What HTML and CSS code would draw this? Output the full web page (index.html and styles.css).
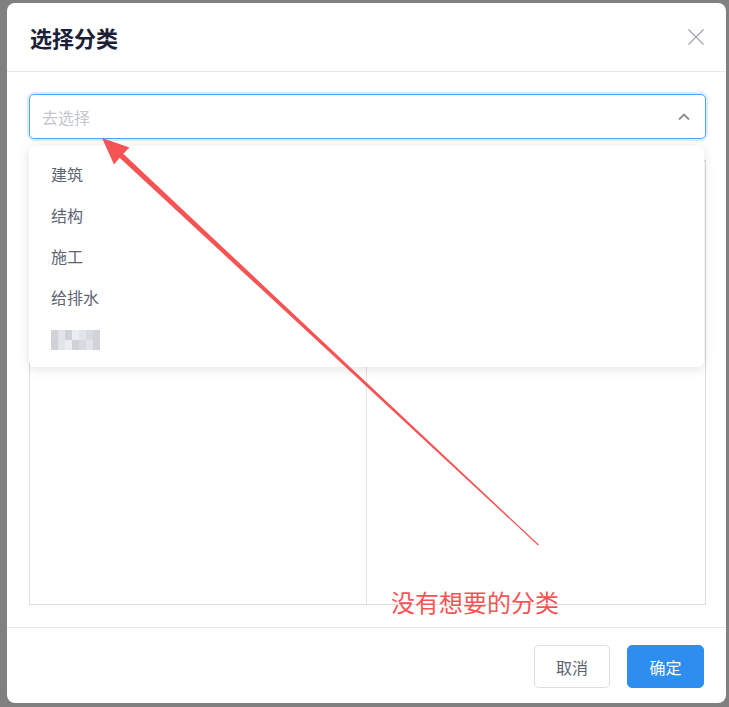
FILE: index.html
```html
<!DOCTYPE html>
<html lang="zh">
<head>
<meta charset="utf-8">
<title>选择分类</title>
<link rel="stylesheet" href="styles.css">
</head>
<body>
<div class="dialog">
  <div class="header">
    <div class="title">选择分类</div>
    <svg class="close" width="18" height="18" viewBox="0 0 18 18"><path d="M1.5 1.5L16.5 16.5M16.5 1.5L1.5 16.5" stroke="#a3a6ad" stroke-width="1.4" fill="none"/></svg>
  </div>
  <div class="body">
    <div class="select-wrap">
      <div class="select">
        <span class="placeholder">去选择</span>
        <svg class="chev" width="14" height="10" viewBox="0 0 14 10"><path d="M2 7.5L7 2.5L12 7.5" stroke="#8a8d96" stroke-width="1.8" fill="none"/></svg>
      </div>
      <div class="dropdown">
        <div class="item">建筑</div>
        <div class="item">结构</div>
        <div class="item">施工</div>
        <div class="item">给排水</div>
        <div class="item blur">
          <span class="mosaic">
            <i class="m1"></i><i class="m2"></i><i class="m3"></i><i class="m4"></i><i class="m2"></i><i class="m5"></i><i class="m1"></i>
            <i class="m3"></i><i class="m2"></i><i class="m4"></i><i class="m3"></i><i class="m5"></i><i class="m2"></i><i class="m1"></i>
          </span>
        </div>
      </div>
    </div>
    <div class="panes">
      <div class="pane first"></div>
      <div class="pane"></div>
    </div>
  </div>
  <div class="footer">
    <button class="btn">取消</button>
    <button class="btn primary">确定</button>
  </div>
</div>
<svg class="annot" width="729" height="707" viewBox="0 0 729 707">
  <polygon points="102,138 129.5,147.5 123.3,153.8 538.8,544.6 538,545.4 119.6,157.8 114,164.5" fill="#f65454"/>
</svg>
<div class="note">没有想要的分类</div>
</body>
</html>
```
FILE: styles.css
```css
html, body {
  margin: 0;
  padding: 0;
}
body {
  width: 729px;
  height: 707px;
  background: #808080;
  font-family: "Noto Sans CJK SC", "Noto Sans", sans-serif;
  overflow: hidden;
  position: relative;
}
.dialog {
  margin: 3px 0 0 7px;
  width: 719px;
  height: 700px;
  background: #fff;
  border-radius: 8px;
  display: flex;
  flex-direction: column;
  box-sizing: border-box;
}
.header {
  height: 69px;
  flex: none;
  box-sizing: border-box;
  border-bottom: 1px solid #e6e7eb;
  display: flex;
  align-items: center;
  justify-content: space-between;
  padding: 0 21px 0 23px;
}
.title {
  font-size: 22px;
  font-weight: 700;
  color: #1b2036;
  line-height: 1;
}
.close {
  display: block;
}
.body {
  padding: 22px 20px 0 22px;
  flex: none;
}
.select-wrap {
  position: relative;
}
.select {
  height: 45px;
  box-sizing: border-box;
  border: 1px solid #55a2f6;
  border-radius: 5px;
  box-shadow: 0 0 0 2px #dcebfc;
  display: flex;
  align-items: center;
  justify-content: space-between;
  padding: 0 14px 0 12px;
}
.placeholder {
  font-size: 16px;
  color: #c3c6cd;
}
.chev {
  display: block;
}
.dropdown {
  position: absolute;
  top: 52px;
  left: 0;
  width: 675px;
  box-sizing: border-box;
  background: #fff;
  border-radius: 6px;
  box-shadow: 0 2px 12px rgba(0, 0, 0, 0.12);
  padding: 8px 0;
  z-index: 2;
}
.item {
  height: 41px;
  line-height: 41px;
  padding-left: 22px;
  font-size: 16px;
  color: #5e6472;
}
.mosaic {
  display: inline-grid;
  grid-template-columns: repeat(7, 7px);
  grid-auto-rows: 10px;
  vertical-align: middle;
  margin-top: -2px;
}
.mosaic i {
  display: block;
}
.m1 { background: #d2d3da; }
.m2 { background: #e3e4e9; }
.m3 { background: #cfd0d8; }
.m4 { background: #ecedf1; }
.m5 { background: #d9dae0; }
.panes {
  margin-top: 21px;
  height: 445px;
  width: 677px;
  box-sizing: border-box;
  border: 1px solid #dedede;
  display: flex;
}
.pane {
  flex: 1;
}
.pane.first {
  flex: none;
  width: 336px;
}
.pane + .pane {
  border-left: 1px solid #e3e3e3;
}
.footer {
  margin-top: 22px;
  border-top: 1px solid #e6e7eb;
  padding: 17px 22px 0 0;
  display: flex;
  justify-content: flex-end;
  gap: 17px;
}
.btn {
  width: 76px;
  height: 43px;
  box-sizing: border-box;
  border: 1px solid #dcdfe6;
  border-radius: 5px;
  background: #fff;
  font-family: "Noto Sans CJK SC", sans-serif;
  font-size: 16px;
  color: #5b6170;
  padding: 0;
}
.btn.primary {
  background: #2e8ef0;
  border-color: #2e8ef0;
  color: #fff;
  width: 77px;
}
.annot {
  position: absolute;
  top: 0;
  left: 0;
  z-index: 5;
  pointer-events: none;
}
.note {
  position: absolute;
  left: 391px;
  top: 586px;
  font-size: 24px;
  line-height: 32px;
  color: #f65454;
  z-index: 5;
}
```
